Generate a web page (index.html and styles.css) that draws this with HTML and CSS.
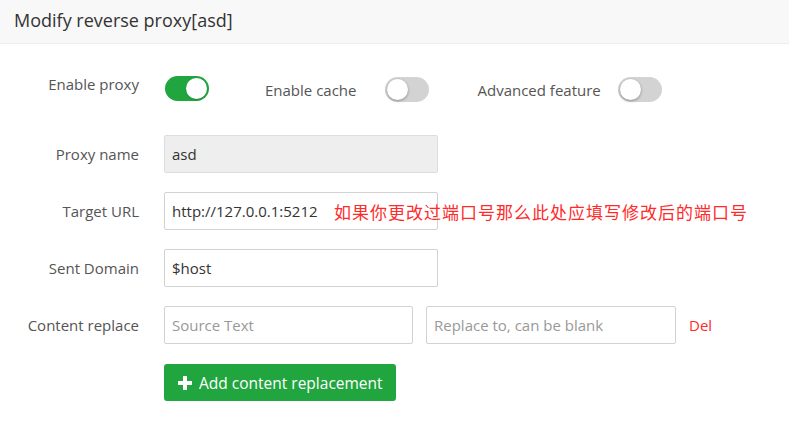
FILE: index.html
```html
<!DOCTYPE html>
<html>
<head>
<meta charset="utf-8">
<link rel="stylesheet" href="styles.css">
</head>
<body>
<div class="dialog">
  <div class="header">Modify reverse proxy[asd]</div>
  <div class="content">
    <div class="switch-row">
      <div class="label label-top">Enable proxy</div>
      <span class="switch on"><span class="knob"></span></span>
      <div class="inline-item first">
        <span class="inline-label">Enable cache</span>
        <span class="switch"><span class="knob"></span></span>
      </div>
      <div class="inline-item second-item">
        <span class="inline-label">Advanced feature</span>
        <span class="switch"><span class="knob"></span></span>
      </div>
    </div>

    <div class="form-row">
      <div class="label">Proxy name</div>
      <div class="input disabled">asd</div>
    </div>

    <div class="form-row">
      <div class="label">Target URL</div>
      <div class="input">http://127.0.0.1:5212</div>
      <span class="hint">如果你更改过端口号那么此处应填写修改后的端口号</span>
    </div>

    <div class="form-row">
      <div class="label">Sent Domain</div>
      <div class="input">$host</div>
    </div>

    <div class="form-row">
      <div class="label">Content replace</div>
      <div class="input small placeholder">Source Text</div>
      <div class="input small second placeholder">Replace to, can be blank</div>
      <span class="del">Del</span>
    </div>

    <div class="btn-row">
      <button class="btn">
        <svg class="plus" width="14" height="14" viewBox="0 0 14 14"><path d="M5 0h4v5h5v4H9v5H5V9H0V5h5z" fill="#fff"/></svg>
        <span>Add content replacement</span>
      </button>
    </div>
  </div>
</div>
</body>
</html>
```

FILE: styles.css
```css
* { box-sizing: border-box; }
html, body { margin: 0; padding: 0; background: #fff; }
body {
  font-family: "Open Sans", "Noto Sans CJK SC", sans-serif;
  color: #333;
  width: 789px;
  height: 426px;
  overflow: hidden;
}
.header {
  height: 44px;
  background: #f8f8f8;
  border-bottom: 1px solid #eeeeee;
  padding-left: 14px;
  line-height: 40px;
  font-size: 18px;
  color: #333;
}
.content { padding-top: 30px; }
.switch-row {
  display: flex;
  align-items: flex-start;
  height: 40px;
}
.label {
  width: 139px;
  text-align: right;
  font-size: 15px;
  color: #555;
  flex: none;
  white-space: nowrap;
}
.label-top { line-height: 20px; }
.switch {
  position: relative;
  display: inline-block;
  width: 44px;
  height: 25px;
  border-radius: 13px;
  background: #d3d3d3;
  flex: none;
}
.switch-row > .switch { margin-left: 26px; margin-top: 2px; }
.switch.on { background: #21a53e; }
.knob {
  position: absolute;
  top: 2px;
  left: 2px;
  width: 21px;
  height: 21px;
  border-radius: 50%;
  background: #fff;
  box-shadow: 0 1px 3px rgba(0,0,0,0.35);
}
.switch.on .knob { left: 21px; box-shadow: 0 1px 2px rgba(0,0,0,0.15); }
.inline-item {
  display: flex;
  align-items: center;
  margin-top: 3px;
}
.inline-item.first { margin-left: 56px; }
.inline-item.second-item { margin-left: 48px; }
.inline-label { font-size: 15px; color: #555; margin-right: 29px; white-space: nowrap; }
.second-item .inline-label { margin-right: 17px; }

.form-row {
  display: flex;
  align-items: center;
  height: 38px;
  margin-top: 19px;
}
.switch-row + .form-row { margin-top: 21px; }
.form-row .label { margin-right: 25px; }
.input {
  width: 274px;
  height: 38px;
  border: 1px solid #d2d2d2;
  border-radius: 2px;
  padding-left: 7px;
  line-height: 36px;
  font-size: 15px;
  color: #333;
  background: #fff;
  flex: none;
  white-space: nowrap;
}
.input.disabled { background: #eeeeee; border-color: #dcdce4; }
.input.small { width: 249px; }
.input.second { margin-left: 13px; width: 250px; }
.placeholder { color: #999; }
.hint {
  margin-left: -104px;
  font-size: 17px;
  color: #ff2a2a;
  letter-spacing: 1px;
  white-space: nowrap;
}
.del { margin-left: 13px; font-size: 15px; color: #ff2a2a; }
.btn-row { margin-top: 20px; padding-left: 164px; }
.btn {
  display: flex;
  align-items: center;
  height: 37px;
  width: 232px;
  padding: 0 0 0 14px;
  border: none;
  border-radius: 3px;
  background: #21a53e;
  color: #fff;
  font-family: "Open Sans", sans-serif;
  font-size: 15.5px;
  white-space: nowrap;
}
.plus { margin-right: 7px; }
```
